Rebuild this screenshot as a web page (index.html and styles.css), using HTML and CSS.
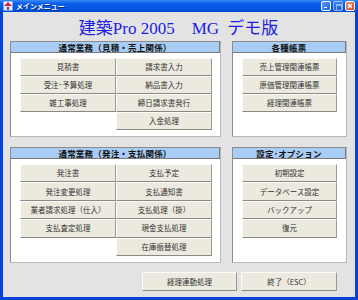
FILE: index.html
```html
<!DOCTYPE html>
<html lang="ja">
<head>
<meta charset="utf-8">
<title>メインメニュー</title>
<link rel="stylesheet" href="styles.css">
</head>
<body>
<div class="window">
  <div class="titlebar">
    <svg class="app-icon" width="10" height="10" viewBox="0 0 10 10">
      <rect x="0.5" y="0.5" width="9" height="9" fill="#f4f4f4"/>
      <path d="M1 5 L5 1 L9 5 Z" fill="#d02040"/>
      <rect x="2" y="5" width="6" height="4" fill="#e8e0f0"/>
      <rect x="4" y="6" width="2" height="3" fill="#5050c0"/>
    </svg>
    <span class="caption">メインメニュー</span>
    <div class="controls">
      <span class="ctl ctl-min"></span>
      <span class="ctl ctl-max"></span>
      <span class="ctl ctl-close"><svg width="10" height="10" viewBox="0 0 10 10"><path d="M3 3 L7 7 M7 3 L3 7" stroke="#fff" stroke-width="1.4"/></svg></span>
    </div>
  </div>
  <div class="client">
    <h1 class="app-title"><span class="jp">建築</span>Pro 2005<span class="jp">　</span>MG<span class="sp"></span><span class="jp">デモ版</span></h1>
    <div class="groups">
      <section class="group">
        <h2 class="group-head">通常業務（見積・売上関係）</h2>
        <div class="cols">
          <div class="col">
            <button class="btn">見積書</button>
            <button class="btn">受注･予算処理</button>
            <button class="btn">雑工事処理</button>
          </div>
          <div class="col">
            <button class="btn">請求書入力</button>
            <button class="btn">納品書入力</button>
            <button class="btn">締日請求書発行</button>
            <button class="btn">入金処理</button>
          </div>
        </div>
      </section>
      <section class="group">
        <h2 class="group-head">各種帳票</h2>
        <div class="cols">
          <div class="col">
            <button class="btn">売上管理関連帳票</button>
            <button class="btn">原価管理関連帳票</button>
            <button class="btn">経理関連帳票</button>
          </div>
        </div>
      </section>
      <section class="group">
        <h2 class="group-head">通常業務（発注・支払関係）</h2>
        <div class="cols">
          <div class="col">
            <button class="btn">発注書</button>
            <button class="btn">発注変更処理</button>
            <button class="btn">業者請求処理（仕入）</button>
            <button class="btn">支払査定処理</button>
          </div>
          <div class="col">
            <button class="btn">支払予定</button>
            <button class="btn">支払通知書</button>
            <button class="btn">支払処理（掛）</button>
            <button class="btn">現金支払処理</button>
            <button class="btn">在庫振替処理</button>
          </div>
        </div>
      </section>
      <section class="group">
        <h2 class="group-head">設定･オプション</h2>
        <div class="cols">
          <div class="col">
            <button class="btn">初期設定</button>
            <button class="btn">データベース設定</button>
            <button class="btn">バックアップ</button>
            <button class="btn">復元</button>
          </div>
        </div>
      </section>
    </div>
    <div class="footer">
      <button class="btn btn-foot">経理連動処理</button>
      <button class="btn btn-foot wide">終了（ESC）</button>
    </div>
  </div>
</div>
</body>
</html>
```
FILE: styles.css
```css
* { box-sizing: border-box; }
html, body { margin: 0; padding: 0; }
body {
  width: 358px;
  height: 300px;
  overflow: hidden;
  font-family: "Noto Sans CJK JP", "Noto Sans", sans-serif;
  background: #ffffff;
}
.window {
  width: 358px;
  height: 300px;
  display: flex;
  flex-direction: column;
  background: #0842d8;
}
.titlebar {
  height: 12px;
  flex: none;
  display: flex;
  align-items: center;
  padding: 0 3px 0 3px;
  background: linear-gradient(to bottom, #3a8cf6 0%, #0a5ee8 30%, #0556e4 70%, #0348d0 100%);
}
.app-icon { flex: none; display: block; }
.caption {
  margin-left: 3px;
  color: #ffffff;
  font-size: 7px;
  font-weight: bold;
  line-height: 12px;
  text-shadow: 1px 1px 0 #0a2a80;
}
.controls {
  margin-left: auto;
  display: flex;
  gap: 2px;
}
.ctl {
  width: 10px;
  height: 10px;
  border: 1px solid #ffffff;
  border-radius: 2px;
  position: relative;
  display: block;
  background: linear-gradient(135deg, #5a9cff, #1c62e6);
}
.ctl-min::after {
  content: "";
  position: absolute;
  left: 2px;
  bottom: 2px;
  width: 3px;
  height: 1px;
  background: #fff;
}
.ctl-max { opacity: 0.55; }
.ctl-max::after {
  content: "";
  position: absolute;
  left: 2px;
  top: 2px;
  width: 4px;
  height: 4px;
  border: 1px solid #fff;
  border-top-width: 2px;
}
.ctl-close {
  background: linear-gradient(135deg, #f09070, #d8401c);
}
.ctl-close svg { position: absolute; left: -1px; top: -1px; }
.client {
  flex: 1;
  margin: 0 3px 3px 3px;
  background: #e3e3e3;
  display: flex;
  flex-direction: column;
  padding: 0 8px 0 7px;
}
.app-title {
  margin: 0;
  height: 29px;
  text-align: center;
  font-family: "Liberation Serif", "Noto Sans CJK JP", serif;
  font-size: 17px;
  font-weight: normal;
  line-height: 29px;
  color: #1d1de0;
}
.app-title .jp {
  font-family: "Noto Sans CJK JP", sans-serif;
}
.app-title .sp {
  display: inline-block;
  width: 8px;
}
.groups {
  display: grid;
  grid-template-columns: 211px 115px;
  grid-template-rows: 96px 116px;
  column-gap: 11px;
  row-gap: 10px;
}
.group {
  background: #ffffff;
  border: 1px solid #8c8c8c;
  border-right-color: #b8b8b8;
  border-bottom-color: #b8b8b8;
  display: flex;
  flex-direction: column;
}
.group-head {
  margin: 0;
  height: 11px;
  background: #a8ccf4;
  border-bottom: 1px solid #7a7a7a;
  border-right: 1px solid #7a7a7a;
  text-align: center;
  font-size: 8.5px;
  font-weight: bold;
  line-height: 10px;
  color: #111;
  letter-spacing: 0.2px;
}
.cols {
  display: flex;
  padding: 5px 0 0 9px;
}
.col {
  display: flex;
  flex-direction: column;
}
.btn {
  width: 96px;
  height: 18px;
  margin: 0;
  padding: 0;
  background: #ece9de;
  border: 1px solid;
  border-color: #fbfbf8 #9a9a94 #8a8a84 #fbfbf8;
  font-family: "Noto Sans CJK JP", sans-serif;
  font-size: 7.5px;
  color: #333;
  line-height: 16px;
  text-align: center;
}
.group:nth-child(even) .btn { width: 95px; }
.group:nth-child(n+3) .btn { height: 18.4px; }
.footer {
  display: flex;
  justify-content: flex-end;
  gap: 4px;
  margin-top: 9px;
  padding-right: 10px;
}
.btn-foot { width: 95px; height: 19px; }
.btn-foot.wide { width: 96px; }
```
